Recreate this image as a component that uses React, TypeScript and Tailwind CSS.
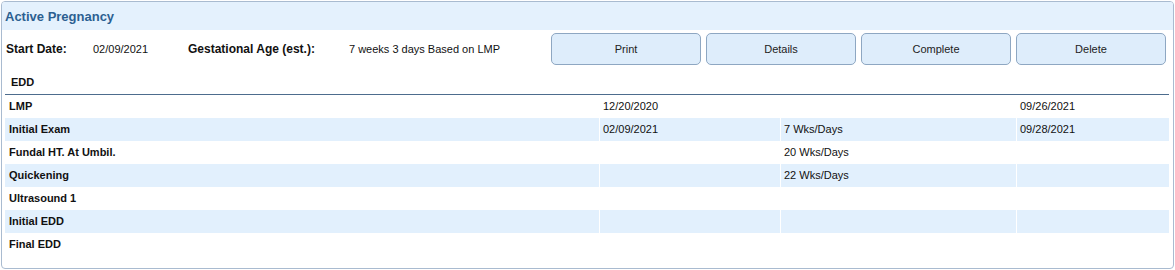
import React from "react";

const rows: [string, string, string, string][] = [
  ["LMP", "12/20/2020", "", "09/26/2021"],
  ["Initial Exam", "02/09/2021", "7 Wks/Days", "09/28/2021"],
  ["Fundal HT. At Umbil.", "", "20 Wks/Days", ""],
  ["Quickening", "", "22 Wks/Days", ""],
  ["Ultrasound 1", "", "", ""],
  ["Initial EDD", "", "", ""],
  ["Final EDD", "", "", ""],
];

export default function App() {
  return (
    <div className="w-[1175px] h-[270px] bg-white p-px" style={{ fontFamily: '"Liberation Sans", Arial, sans-serif' }}>
      <div className="h-[268px] w-[1173px] border border-[#a9bbd0] rounded-[4px] overflow-hidden flex flex-col">
        <div className="h-[28px] bg-[#e4f1fd] flex items-center pl-[3px] pr-[4px] pt-[2px]">
          <span className="text-[13px] font-bold text-[#2c5f91]">Active Pregnancy</span>
        </div>
        <div className="flex items-center h-[38px] text-[11px] text-[#111]">
          <span className="font-bold text-[12px] w-[91px] pl-[4px]">Start Date:</span>
          <span className="w-[95px]">02/09/2021</span>
          <span className="font-bold text-[12px] w-[161px]">Gestational Age (est.):</span>
          <span className="w-[202px]">7 weeks 3 days Based on LMP</span>
          <div className="flex gap-[5px]">
            {["Print", "Details", "Complete", "Delete"].map((b) => (
              <button
                key={b}
                className="w-[150px] h-[32px] bg-[#deedfb] border border-[#8ea7c2] rounded-[5px] text-[11px] text-[#222]"
              >
                {b}
              </button>
            ))}
          </div>
        </div>
        <div className="ml-[3px] mr-[4px] mt-[3px] h-[24px] flex items-center pl-[6px] border-b border-[#4d6c8d] text-[11px] font-bold text-[#111]">
          EDD
        </div>
        <div className="ml-[3px] mr-[4px] text-[11px] text-[#111]">
          {rows.map((r, i) => (
            <div
              key={r[0]}
              className="grid grid-cols-[594px_180px_235px_1fr] gap-x-px h-[23px]"
            >
              {r.map((c, j) => (
                <div
                  key={j}
                  className={`flex items-center ${j === 0 ? "pl-[4px] font-bold text-[11px]" : "pl-[3px]"} ${
                    i % 2 === 1 ? "bg-[#e2f0fd]" : "bg-white"
                  }`}
                >
                  {c}
                </div>
              ))}
            </div>
          ))}
        </div>
      </div>
    </div>
  );
}
